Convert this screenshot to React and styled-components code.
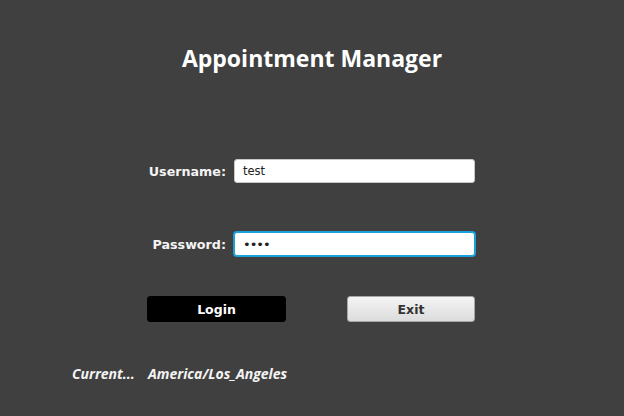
import React from 'react'
import styled, { createGlobalStyle } from 'styled-components'

const GlobalStyle = createGlobalStyle`
  html, body {
    margin: 0;
    padding: 0;
    background: #404040;
  }
  * { box-sizing: border-box; }
`

const Page = styled.div`
  width: 624px;
  height: 416px;
  background: #404040;
  display: flex;
  flex-direction: column;
  font-family: "DejaVu Sans", Verdana, sans-serif;
  color: #f4f4f4;
`

const Title = styled.h1`
  margin: 42px 0 0;
  text-align: center;
  font-family: "Open Sans", "Liberation Sans", sans-serif;
  font-weight: 700;
  font-size: 23px;
  line-height: 32px;
  color: #ffffff;
`

const Row = styled.div`
  display: flex;
  align-items: center;
  margin-top: ${p => p.$top}px;
  padding-left: ${p => p.$left || 0}px;
  height: ${p => p.$height || 24}px;
`

const Label = styled.label`
  width: 86px;
  text-align: right;
  font-weight: bold;
  font-size: 12.7px;
  margin-right: 8px;
  color: #f4f4f4;
`

const Field = styled.input`
  width: 241px;
  height: 24px;
  padding: 0 8px;
  border-radius: 3px;
  border: 1px solid ${p => (p.$focused ? '#1aa0d8' : '#c8c8c8')};
  box-shadow: ${p => (p.$focused ? '0 0 0 1px #1aa0d8' : 'none')};
  background: #ffffff;
  font-family: "DejaVu Sans", Verdana, sans-serif;
  font-size: ${p => (p.type === 'password' ? 13 : 11.5)}px;
  letter-spacing: ${p => (p.type === 'password' ? '-1px' : '0')};
  color: #222;
  outline: none;
  caret-color: #222;
`

const Button = styled.button`
  height: 26px;
  width: ${p => p.$width}px;
  margin-right: ${p => p.$gap || 0}px;
  border-radius: 3px;
  font-family: "DejaVu Sans", Verdana, sans-serif;
  font-weight: bold;
  font-size: 12.5px;
  cursor: pointer;
  border: 1px solid ${p => (p.$dark ? '#000' : '#a8a8a8')};
  background: ${p => (p.$dark ? '#000' : 'linear-gradient(#f4f4f4, #dcdcdc)')};
  color: ${p => (p.$dark ? '#ffffff' : '#333333')};
`

const FooterText = styled.span`
  font-family: "Open Sans", "Liberation Sans", sans-serif;
  font-style: italic;
  font-weight: 700;
  font-size: 14px;
  color: #f4f4f4;
  width: ${p => p.$width || 'auto'};
`

export default function App() {
  return (
    <Page>
      <GlobalStyle />
      <Title>Appointment Manager</Title>

      <Row $top={85} $left={140}>
        <Label htmlFor="user">Username:</Label>
        <Field id="user" defaultValue="test" />
      </Row>

      <Row $top={49} $left={140}>
        <Label htmlFor="pass">Password:</Label>
        <Field id="pass" type="password" defaultValue="1234" $focused autoFocus />
      </Row>

      <Row $top={40} $left={147} $height={26}>
        <Button $dark $width={139} $gap={61}>Login</Button>
        <Button $width={128}>Exit</Button>
      </Row>

      <Row $top={40} $left={72} $height={22}>
        <FooterText $width="76px">Current...</FooterText>
        <FooterText>America/Los_Angeles</FooterText>
      </Row>
    </Page>
  )
}
